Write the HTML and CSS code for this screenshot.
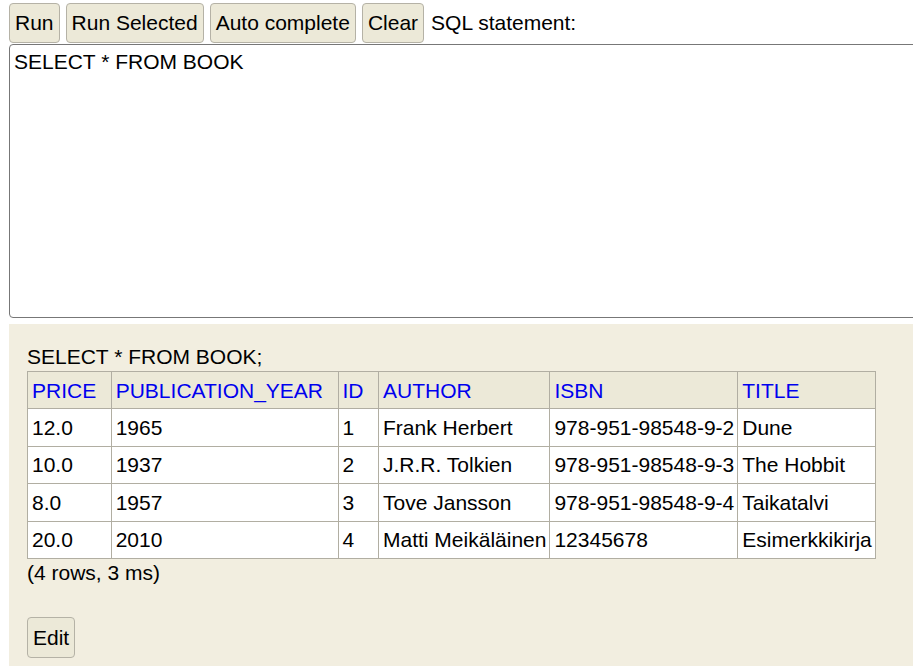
FILE: index.html
```html
<!DOCTYPE html>
<html>
<head>
<meta charset="utf-8">
<link rel="stylesheet" href="styles.css">
</head>
<body>
<div class="toolbar">
  <button class="btn">Run</button>
  <button class="btn">Run Selected</button>
  <button class="btn">Auto complete</button>
  <button class="btn">Clear</button>
  <span class="label">SQL statement:</span>
</div>
<textarea class="sql">SELECT * FROM BOOK</textarea>
<div class="result">
  <div class="stmt">SELECT * FROM BOOK;</div>
  <table class="grid">
    <tr><th><a>PRICE</a></th><th><a>PUBLICATION_YEAR</a></th><th><a>ID</a></th><th><a>AUTHOR</a></th><th><a>ISBN</a></th><th><a>TITLE</a></th></tr>
    <tr><td>12.0</td><td>1965</td><td>1</td><td>Frank Herbert</td><td>978-951-98548-9-2</td><td>Dune</td></tr>
    <tr><td>10.0</td><td>1937</td><td>2</td><td>J.R.R. Tolkien</td><td>978-951-98548-9-3</td><td>The Hobbit</td></tr>
    <tr><td>8.0</td><td>1957</td><td>3</td><td>Tove Jansson</td><td>978-951-98548-9-4</td><td>Taikatalvi</td></tr>
    <tr><td>20.0</td><td>2010</td><td>4</td><td>Matti Meikäläinen</td><td>12345678</td><td>Esimerkkikirja</td></tr>
  </table>
  <div class="info">(4 rows, 3 ms)</div>
  <button class="btn edit">Edit</button>
</div>
</body>
</html>
```
FILE: styles.css
```css
html, body {
  margin: 0;
  padding: 0;
  background: #ffffff;
  overflow: hidden;
}
body {
  padding: 3px 0 0 9px;
  font-family: "Liberation Sans", Arial, sans-serif;
  font-size: 21px;
  color: #000;
  width: 960px;
  height: 663px;
}
.toolbar {
  display: flex;
  align-items: flex-start;
  gap: 6px;
  height: 41px;
}
.btn {
  font-family: "Liberation Sans", Arial, sans-serif;
  font-size: 21px;
  height: 40px;
  padding: 0 5px;
  background: #ece9d8;
  border: 1px solid #b5b2a6;
  border-radius: 4px;
  color: #000;
  margin: 0;
}
.label {
  margin-left: 1px;
  line-height: 40px;
}
.sql {
  display: block;
  box-sizing: border-box;
  width: 930px;
  height: 274px;
  margin: 0;
  padding: 5px 4px;
  border: 1px solid #777;
  border-radius: 4px 0 0 4px;
  font-family: "Liberation Sans", Arial, sans-serif;
  font-size: 21px;
  line-height: 24px;
  resize: none;
  color: #000;
  background: #fff;
}
.result {
  margin-top: 6px;
  background: #f2eee0;
  padding: 21px 0 20px 18px;
  height: 400px;
}
.stmt {
  line-height: 24px;
  margin-bottom: 2px;
}
.grid {
  border-collapse: collapse;
  background: #fff;
}
.grid th, .grid td {
  border: 1px solid #b1aea2;
  padding: 6.5px 3px 6px 4px;
  line-height: 24px;
  text-align: left;
  font-weight: normal;
  white-space: nowrap;
}
.grid th {
  background: #ece9d8;
  padding-right: 14.5px;
  padding-bottom: 5.5px;
}
.grid th a {
  color: #0000ee;
  text-decoration: none;
}
.info {
  line-height: 24px;
  margin-top: 2px;
}
.edit {
  display: block;
  margin-top: 32px;
  height: 41px;
  padding: 0 5px;
}
```
